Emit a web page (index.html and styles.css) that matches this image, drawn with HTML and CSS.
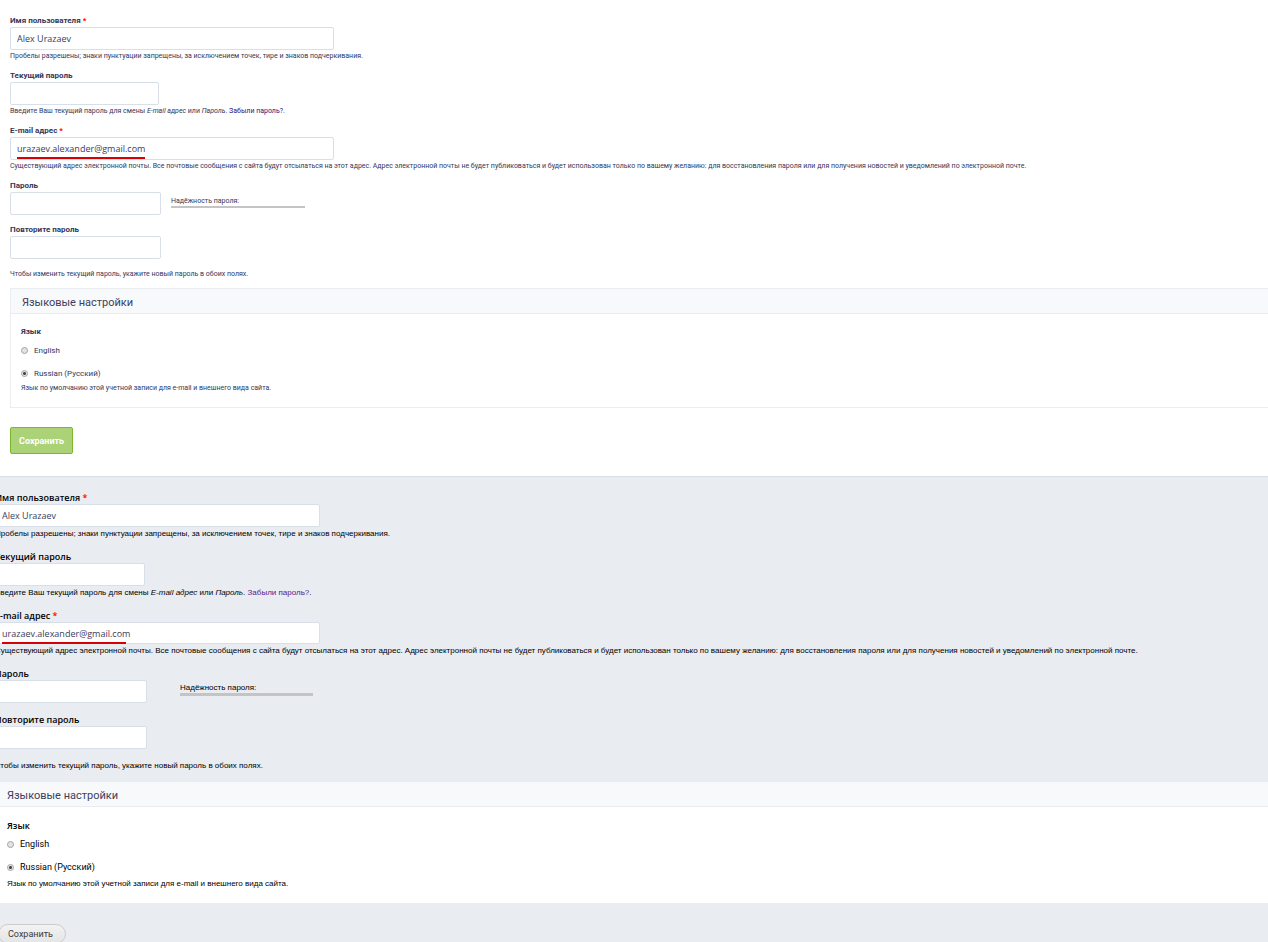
FILE: index.html
```
<!DOCTYPE html>
<html lang="ru">
<head>
<meta charset="utf-8">
<title>Настройки пользователя</title>
<link rel="stylesheet" href="styles.css">
</head>
<body>
<form class="account account--light">
  <div class="field">
    <label class="label" for="a-name">Имя пользователя <span class="required">*</span></label>
    <input class="input input--wide" id="a-name" type="text" value="Alex Urazaev">
    <p class="hint">Пробелы разрешены; знаки пунктуации запрещены, за исключением точек, тире и знаков подчеркивания.</p>
  </div>
  <div class="field">
    <label class="label" for="a-current">Текущий пароль</label>
    <input class="input input--current" id="a-current" type="password">
    <p class="hint">Введите Ваш текущий пароль для смены <em>E-mail адрес</em> или <em>Пароль</em>. <a class="link" href="#">Забыли пароль?</a>.</p>
  </div>
  <div class="field">
    <label class="label" for="a-mail">E-mail адрес <span class="required">*</span></label>
    <div class="mail"><input class="input input--wide" id="a-mail" type="text" value="urazaev.alexander@gmail.com"><span class="underline"></span></div>
    <p class="hint">Существующий адрес электронной почты. Все почтовые сообщения с сайта будут отсылаться на этот адрес. Адрес электронной почты не будет публиковаться и будет использован только по вашему желанию: для восстановления пароля или для получения новостей и уведомлений по электронной почте.</p>
  </div>
  <div class="field">
    <label class="label" for="a-pass">Пароль</label>
    <div class="pass-row">
      <input class="input input--pass" id="a-pass" type="password">
      <div class="strength"><span class="strength-title">Надёжность пароля:</span><span class="strength-bar"></span></div>
    </div>
  </div>
  <div class="field">
    <label class="label" for="a-repeat">Повторите пароль</label>
    <input class="input input--pass" id="a-repeat" type="password">
  </div>
  <p class="hint hint--passwords">Чтобы изменить текущий пароль, укажите новый пароль в обоих полях.</p>
  <section class="panel">
    <h2 class="panel-title">Языковые настройки</h2>
    <div class="panel-body" role="radiogroup" aria-labelledby="a-lang">
      <div class="label" id="a-lang">Язык</div>
      <label class="option"><input class="radio" type="radio" name="a-language">English</label>
      <label class="option"><input class="radio" type="radio" name="a-language" checked>Russian (Русский)</label>
      <p class="hint">Язык по умолчанию этой учетной записи для e-mail и внешнего вида сайта.</p>
    </div>
  </section>
  <button class="save save--green" type="button">Сохранить</button>
</form>

<form class="account account--grey">
  <div class="field">
    <label class="label" for="b-name">Имя пользователя <span class="required">*</span></label>
    <input class="input input--wide" id="b-name" type="text" value="Alex Urazaev">
    <p class="hint">Пробелы разрешены; знаки пунктуации запрещены, за исключением точек, тире и знаков подчеркивания.</p>
  </div>
  <div class="field">
    <label class="label" for="b-current">Текущий пароль</label>
    <input class="input input--current" id="b-current" type="password">
    <p class="hint">Введите Ваш текущий пароль для смены <em>E-mail адрес</em> или <em>Пароль</em>. <a class="link" href="#">Забыли пароль?</a>.</p>
  </div>
  <div class="field">
    <label class="label" for="b-mail">E-mail адрес <span class="required">*</span></label>
    <div class="mail"><input class="input input--wide" id="b-mail" type="text" value="urazaev.alexander@gmail.com"><span class="underline"></span></div>
    <p class="hint">Существующий адрес электронной почты. Все почтовые сообщения с сайта будут отсылаться на этот адрес. Адрес электронной почты не будет публиковаться и будет использован только по вашему желанию: для восстановления пароля или для получения новостей и уведомлений по электронной почте.</p>
  </div>
  <div class="field">
    <label class="label" for="b-pass">Пароль</label>
    <div class="pass-row">
      <input class="input input--pass" id="b-pass" type="password">
      <div class="strength"><span class="strength-title">Надёжность пароля:</span><span class="strength-bar"></span></div>
    </div>
  </div>
  <div class="field">
    <label class="label" for="b-repeat">Повторите пароль</label>
    <input class="input input--pass" id="b-repeat" type="password">
  </div>
  <p class="hint hint--passwords">Чтобы изменить текущий пароль, укажите новый пароль в обоих полях.</p>
  <section class="panel">
    <h2 class="panel-title">Языковые настройки</h2>
    <div class="panel-body" role="radiogroup" aria-labelledby="b-lang">
      <div class="label" id="b-lang">Язык</div>
      <label class="option"><input class="radio" type="radio" name="b-language">English</label>
      <label class="option"><input class="radio" type="radio" name="b-language" checked>Russian (Русский)</label>
      <p class="hint">Язык по умолчанию этой учетной записи для e-mail и внешнего вида сайта.</p>
    </div>
  </section>
  <button class="save save--pill" type="button">Сохранить</button>
</form>
</body>
</html>
```

FILE: styles.css
```
* { box-sizing: border-box; }
body {
  margin: 0;
  height: 100vh;
  overflow: hidden;
  background: #e9ecf1;
  color: #32375a;
  font-family: Roboto, "Open Sans", sans-serif;
}
p, h2 { margin: 0; }

.account { display: flex; flex-direction: column; }
.account--light {
  padding: 15px 0 22px 10px;
  background: #fff;
  border-bottom: 1px solid #d9dfe6;
}
.account--grey {
  margin-left: -5px;
  padding-top: 14px;
  color: #000;
}

.field { margin-bottom: 9px; }
.label {
  display: block;
  font-size: 8px;
  line-height: 12px;
  font-weight: 700;
}
.required { color: #f00; }
.input {
  display: block;
  height: 23px;
  padding: 0 6px;
  border: 1px solid #d9dfe9;
  border-radius: 2px;
  background: #fff;
  color: #3c405c;
  font: 9px/20px "Open Sans", sans-serif;
}
.input--wide { width: 324px; }
.input--current { width: 149px; }
.input--pass { width: 151px; }
.hint {
  padding-top: 1px;
  font-size: 7px;
  line-height: 10px;
  white-space: nowrap;
}
.hint--passwords { margin-bottom: 9px; }
.link { color: #33107c; text-decoration: none; }

.mail { position: relative; }
.underline {
  position: absolute;
  left: 7px;
  bottom: 1px;
  width: 128px;
  height: 2px;
  background: #d60005;
}

.pass-row { display: flex; gap: 10px; }
.strength { width: 134px; padding-top: 4px; }
.strength-title { display: block; font-size: 7px; line-height: 10px; }
.strength-bar { display: block; height: 2px; background: #c4c4c4; }

.panel { border: 1px solid #ebedf1; border-width: 0 0 1px 1px; }
.panel-title {
  padding: 3px 0 0 11px;
  border: 1px solid #e9edf1;
  border-width: 1px 0;
  background: #f8f9fb;
  color: #3c405c;
  font-size: 11px;
  line-height: 21px;
  font-weight: 400;
}
.panel-body { padding: 12px 10px 14px; }
.option {
  display: flex;
  align-items: center;
  gap: 6px;
  width: fit-content;
  height: 12px;
  margin: 6px 0 11px;
  font-size: 8px;
}
.option + .option { margin-bottom: 3px; }
.radio {
  appearance: none;
  width: 7px;
  height: 7px;
  margin: 0;
  border: 1px solid #a3a3a3;
  border-radius: 50%;
  background: #e3e3e3;
}
.radio:checked { background: radial-gradient(circle, #444 0 1px, #e8e8e8 2px); }

.save { align-self: flex-start; font-family: inherit; }
.save--green {
  height: 27px;
  margin-top: 19px;
  padding: 0 8px;
  border: 1px solid #7db72f;
  border-radius: 2px;
  background: #acd278;
  color: #fff;
  font-size: 9px;
  font-weight: 700;
}
.save--pill {
  height: 20px;
  margin: 21px 0 0 3px;
  padding: 0 12px 0 9px;
  border: 1px solid #ccc;
  border-radius: 10px;
  background: linear-gradient(#f3f3f3, #e4e4e4);
  color: #3a3a3a;
  font-size: 9px;
}

.account--grey .field { margin-bottom: 10px; }
.account--grey .label {
  font-family: "Open Sans", sans-serif;
  font-size: 9px;
  line-height: 13px;
  font-weight: 600;
}
.account--grey .input--wide { width: 325px; }
.account--grey .input--current { width: 150px; }
.account--grey .input--pass { width: 152px; }
.account--grey .mail .input { height: 22px; }
.account--grey .hint {
  font-family: "Liberation Sans", Arial, sans-serif;
  font-size: 8px;
  line-height: 12px;
}
.account--grey .hint--passwords { margin-bottom: 10px; }
.account--grey .link { color: #551a8b; }
.account--grey .underline { width: 124px; bottom: 0; }
.account--grey .pass-row { gap: 33px; }
.account--grey .strength { width: 133px; padding-top: 3px; }
.account--grey .strength-title { font-family: "Liberation Sans", Arial, sans-serif; font-size: 8px; }
.account--grey .strength-bar { height: 3px; }
.account--grey .panel { border: 0; background: #fff; }
.account--grey .panel-title { border-top: 0; padding-left: 12px; }
.account--grey .panel-body { padding: 12px 12px 13px; }
.account--grey .option { font-size: 9px; }
.account--grey .option + .option { margin-bottom: 4px; }
```
